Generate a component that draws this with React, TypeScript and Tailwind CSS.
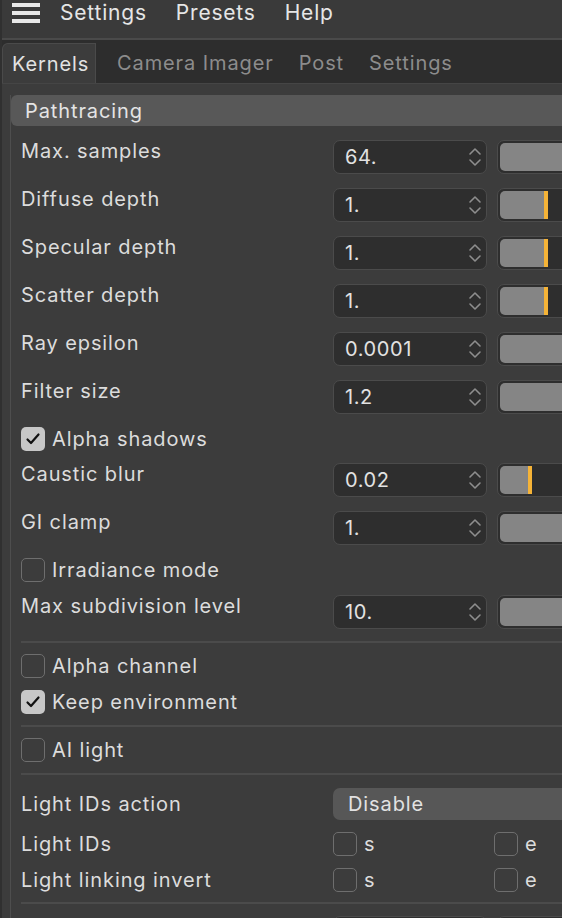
import React from 'react';

const FONT = { fontFamily: 'Inter, "Noto Sans", "Liberation Sans", sans-serif' };

function Chevrons() {
  return (
    <svg className="h-[26px] w-[14px]" viewBox="0 0 14 26" fill="none" stroke="#8e8e8e" strokeWidth="1.6" strokeLinecap="round" strokeLinejoin="round">
      <path d="M2 10 L7 5 L12 10" />
      <path d="M2 16 L7 21 L12 16" />
    </svg>
  );
}

function Checkbox({ checked }: { checked?: boolean }) {
  if (checked) {
    return (
      <span className="flex h-[24px] w-[24px] shrink-0 items-center justify-center rounded-[5px] bg-[#c7c7c7]">
        <svg className="h-[16px] w-[16px]" viewBox="0 0 16 16" fill="none" stroke="#111" strokeWidth="2.2" strokeLinecap="round" strokeLinejoin="round">
          <path d="M2.5 8.5 L6 12 L13.5 3.5" />
        </svg>
      </span>
    );
  }
  return <span className="h-[24px] w-[24px] shrink-0 rounded-[5px] border-[1.5px] border-[#6e6e6e]" />;
}

// fill = width of the grey part in px, marker = orange handle visible
function Slider({ fill, marker }: { fill?: number; marker?: boolean }) {
  return (
    <div className="ml-[10px] flex h-[34px] w-[140px] shrink-0 rounded-[7px] border border-[#4b4b4b] bg-[#2e2e2e] py-[2px] pl-[2px]">
      {fill === undefined ? (
        <div className="h-full flex-1 rounded-l-[5px] bg-[#858585]" />
      ) : (
        <>
          <div className="h-full rounded-l-[5px] bg-[#858585]" style={{ width: fill }} />
          {marker && <div className="h-full w-[4px] bg-[#f5b337]" />}
        </>
      )}
    </div>
  );
}

function NumberRow({ label, value, fill, marker }: { label: string; value: string; fill?: number; marker?: boolean }) {
  return (
    <div className="flex h-[48px] items-center">
      <div className="w-[312px] shrink-0 pb-[12px] text-[20px] tracking-[0.9px] text-[#dcdcdc]">{label}</div>
      <div className="flex h-[34px] w-[154px] shrink-0 items-center justify-between rounded-[7px] border border-[#4b4b4b] bg-[#2e2e2e] pl-[11px] pr-[4px]">
        <span className="text-[20px] tracking-[0.6px] text-[#e2e2e2]">{value}</span>
        <Chevrons />
      </div>
      <Slider fill={fill} marker={marker} />
    </div>
  );
}

function CheckRow({ label, checked, className }: { label: string; checked?: boolean; className: string }) {
  return (
    <div className={`flex items-center gap-[7px] ${className}`}>
      <Checkbox checked={checked} />
      <span className="text-[20px] tracking-[0.9px] text-[#dcdcdc]">{label}</span>
    </div>
  );
}

function Separator({ className }: { className: string }) {
  return <div className={`h-[2px] bg-[#4b4b4b] ${className}`} />;
}

function PairRow({ label, className }: { label: string; className: string }) {
  return (
    <div className={`flex items-center ${className}`}>
      <div className="w-[312px] shrink-0 text-[20px] tracking-[0.9px] text-[#dcdcdc]">{label}</div>
      <div className="flex w-[161px] shrink-0 items-center gap-[7px]">
        <Checkbox />
        <span className="text-[20px] text-[#dcdcdc]">s</span>
      </div>
      <div className="flex items-center gap-[7px]">
        <Checkbox />
        <span className="text-[20px] text-[#dcdcdc]">e</span>
      </div>
    </div>
  );
}

export default function App() {
  return (
    <div className="h-[918px] w-[562px] overflow-hidden border-l-2 border-[#303030] bg-[#3c3c3c]" style={FONT}>
      {/* Menu bar */}
      <div className="flex h-[40px] items-center border-b-2 border-[#4a4a4a] bg-[#3a3a3a] pb-[12px]">
        <div className="ml-[10px] flex w-[28px] flex-col gap-[4.5px]">
          <span className="h-[3.5px] bg-[#e8e8e8]" />
          <span className="h-[3.5px] bg-[#e8e8e8]" />
          <span className="h-[3.5px] bg-[#e8e8e8]" />
        </div>
        <div className="ml-[20px] flex gap-[29px] text-[21px] tracking-[0.8px] text-[#e6e6e6]">
          <span>Settings</span>
          <span>Presets</span>
          <span>Help</span>
        </div>
      </div>

      {/* Tabs */}
      <div className="flex h-[44px] items-end border-b border-[#454545] bg-[#2d2d2d]">
        <div className="flex h-[40px] w-[94px] items-center rounded-tl-[6px] border-l border-t border-r border-[#4a4a4a] bg-[#3c3c3c] pl-[9px] text-[20px] tracking-[0.9px] text-[#e2e2e2]">
          Kernels
        </div>
        <div className="flex h-[40px] items-center gap-[25px] pl-[21px] text-[20px] tracking-[0.9px] text-[#8c8c8c]">
          <span>Camera Imager</span>
          <span>Post</span>
          <span>Settings</span>
        </div>
      </div>

      {/* Content */}
      <div className="pl-[8px] pt-[11px]">
        <div className="border-l border-[#4e4e4e]">
          <div className="flex h-[31px] items-center rounded-l-[6px] bg-[#585858] pl-[14px] text-[20px] tracking-[0.9px] text-[#e4e4e4]">
            Pathtracing
          </div>
          <div className="pl-[10px] pt-[7px]">
            <NumberRow label="Max. samples" value="64." />
            <NumberRow label="Diffuse depth" value="1." fill={44} marker />
            <NumberRow label="Specular depth" value="1." fill={44} marker />
            <NumberRow label="Scatter depth" value="1." fill={44} marker />
            <NumberRow label="Ray epsilon" value="0.0001" />
            <NumberRow label="Filter size" value="1.2" />
            <CheckRow label="Alpha shadows" checked className="h-[35px]" />
            <NumberRow label="Caustic blur" value="0.02" fill={28} marker />
            <NumberRow label="GI clamp" value="1." />
            <CheckRow label="Irradiance mode" className="h-[36px]" />
            <NumberRow label="Max subdivision level" value="10." />
            <Separator className="mt-[5px]" />
            <CheckRow label="Alpha channel" className="mt-[5px] h-[36px]" />
            <CheckRow label="Keep environment" checked className="h-[36px]" />
            <Separator className="mt-[5px]" />
            <CheckRow label="AI light" className="mt-[5px] h-[36px]" />
            <Separator className="mt-[5px]" />
            <div className="mt-[7px] flex h-[44px] items-center">
              <div className="w-[312px] shrink-0 text-[20px] tracking-[0.9px] text-[#dcdcdc]">Light IDs action</div>
              <div className="flex h-[32px] w-[260px] shrink-0 items-center rounded-l-[7px] bg-[#575757] pl-[15px] text-[20px] tracking-[0.9px] text-[#e2e2e2]">
                Disable
              </div>
            </div>
            <PairRow label="Light IDs" className="h-[35px]" />
            <PairRow label="Light linking invert" className="h-[37px]" />
            <Separator className="mt-[4px]" />
            <div className="mt-[12px] flex">
              <div className="w-[312px] shrink-0" />
              <div className="h-[34px] w-[154px] shrink-0 rounded-[7px] border border-[#4b4b4b] bg-[#2e2e2e]" />
              <div className="ml-[10px] h-[34px] w-[140px] shrink-0 rounded-[7px] border border-[#4b4b4b] bg-[#2e2e2e]" />
            </div>
          </div>
        </div>
      </div>
    </div>
  );
}
